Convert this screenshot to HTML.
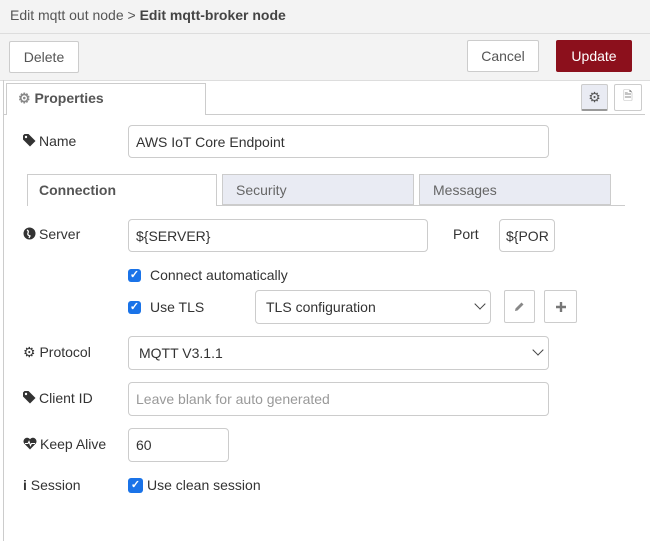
<!DOCTYPE html><html><head><style>
body{margin:0;width:650px;height:541px;overflow:hidden;background:#fff;font-family:"Liberation Sans",sans-serif;font-size:14px;color:#333;position:relative}
.a{position:absolute}
.in{position:absolute;border:1px solid #ccc;border-radius:4px;background:#fff;box-sizing:border-box;padding-left:7px;display:flex;align-items:center;font-size:14px;color:#333}
.btn{position:absolute;border:1px solid #ccc;background:#fff;box-sizing:border-box;display:flex;align-items:center;justify-content:center;color:#555;font-size:14px;border-radius:2px}
.lbl{position:absolute;font-size:14px;color:#333}
.lbl svg{vertical-align:-1px;margin-right:3px}
.cb{position:absolute;width:13px;height:13px;background:#1a73e8;border-radius:3px;color:#fff;font-size:11px;line-height:13px;text-align:center;font-weight:bold}
.chev{position:absolute;width:7px;height:7px;border-right:1.5px solid #444;border-bottom:1.5px solid #444;transform:rotate(45deg)}
</style></head><body>
<div class="a" style="left:0;top:0;width:650px;height:80px;background:#f3f3f3;border-bottom:1px solid #ddd"></div>
<div class="a" style="left:0;top:33px;width:650px;height:1px;background:#ddd"></div>
<div class="a" style="left:10px;top:7px;color:#555;font-size:14px">Edit mqtt out node &gt; <b style="color:#444">Edit mqtt-broker node</b></div>
<div class="btn" style="left:9px;top:41px;width:70px;height:32px">Delete</div>
<div class="btn" style="left:467px;top:40px;width:72px;height:32px">Cancel</div>
<div class="btn" style="left:556px;top:40px;width:76px;height:32px;background:#8c101c;border-color:#8c101c;color:#fff">Update</div>
<div class="a" style="left:3px;top:80px;width:1px;height:461px;background:#ccc"></div>
<div class="a" style="left:3px;top:114px;width:642px;height:1px;background:#ccc"></div>
<div class="a" style="left:6px;top:83px;width:200px;height:32px;background:#fff;border:1px solid #ccc;border-bottom:none;box-sizing:border-box"></div>
<div class="a" style="left:18px;top:90px;font-weight:bold;color:#555;font-size:14px"><span style="color:#888">⚙</span> Properties</div>
<div class="btn" style="left:581px;top:84px;width:27px;height:27px;background:#e9ebf3;border-bottom:2px solid #999;color:#555">⚙</div>
<div class="btn" style="left:614px;top:84px;width:28px;height:27px;color:#888;font-size:12px">🗎</div>
<div class="lbl" style="left:23px;top:133px"><svg width="13" height="13" viewBox="0 0 13 13"><path d="M0 1.5V5.5L7 12.5L12.5 7L5.5 0H1.5Z" fill="#333"/><circle cx="3" cy="3" r="1.2" fill="#fff"/></svg>Name</div>
<div class="in" style="left:128px;top:125px;width:421px;height:33px">AWS IoT Core Endpoint</div>
<div class="a" style="left:27px;top:205px;width:598px;height:1px;background:#ccc"></div>
<div class="a" style="left:27px;top:174px;width:190px;height:32px;background:#fff;border:1px solid #ccc;border-bottom:none;box-sizing:border-box;padding:7px 11px;font-weight:bold;color:#555">Connection</div>
<div class="a" style="left:222px;top:174px;width:192px;height:31px;background:#e9ebf3;border:1px solid #ccc;box-sizing:border-box;padding:7px 13px;color:#666">Security</div>
<div class="a" style="left:419px;top:174px;width:192px;height:31px;background:#e9ebf3;border:1px solid #ccc;box-sizing:border-box;padding:7px 13px;color:#666">Messages</div>
<div class="lbl" style="left:23px;top:226px"><svg width="13" height="13" viewBox="0 0 13 13"><circle cx="6.5" cy="6.5" r="6" fill="#333"/><path d="M4 3Q6 4 5 6T7 9L6 11" stroke="#fff" stroke-width="1.3" fill="none"/></svg>Server</div>
<div class="in" style="left:128px;top:219px;width:300px;height:33px">${SERVER}</div>
<div class="lbl" style="left:453px;top:226px">Port</div>
<div class="in" style="left:499px;top:219px;width:56px;height:33px;overflow:hidden;white-space:nowrap;padding-left:6px">${POR</div>
<div class="cb" style="left:128px;top:269px">✓</div>
<div class="lbl" style="left:150px;top:267px">Connect automatically</div>
<div class="cb" style="left:128px;top:301px">✓</div>
<div class="lbl" style="left:150px;top:299px">Use TLS</div>
<div class="in" style="left:255px;top:290px;width:236px;height:34px;padding-left:10px">TLS configuration</div>
<div class="chev" style="left:476px;top:300px"></div>
<div class="btn" style="left:504px;top:290px;width:31px;height:33px"><svg width="11" height="11" viewBox="0 0 11 11"><path d="M1 10L1.5 7.5L7.5 1.5L9.5 3.5L3.5 9.5Z" fill="#888"/></svg></div>
<div class="btn" style="left:544px;top:290px;width:33px;height:33px"><svg width="10" height="10"><path d="M5 0V10M0 5H10" stroke="#777" stroke-width="2.4"/></svg></div>
<div class="lbl" style="left:23px;top:344px">⚙ Protocol</div>
<div class="in" style="left:128px;top:336px;width:421px;height:34px;padding-left:10px">MQTT V3.1.1</div>
<div class="chev" style="left:534px;top:346px"></div>
<div class="lbl" style="left:23px;top:390px"><svg width="13" height="13" viewBox="0 0 13 13"><path d="M0 1.5V5.5L7 12.5L12.5 7L5.5 0H1.5Z" fill="#333"/><circle cx="3" cy="3" r="1.2" fill="#fff"/></svg>Client ID</div>
<div class="in" style="left:128px;top:382px;width:421px;height:34px;color:#999">Leave blank for auto generated</div>
<div class="lbl" style="left:23px;top:436px"><svg width="14" height="13" viewBox="0 0 14 13"><path d="M7 12.5L1.2 6.5A3.3 3.3 0 0 1 7 2.2A3.3 3.3 0 0 1 12.8 6.5Z" fill="#333"/><path d="M2 6.5H5L6 4.5L7.5 8.5L8.5 6.5H12" stroke="#fff" stroke-width="1.1" fill="none"/></svg>Keep Alive</div>
<div class="in" style="left:128px;top:428px;width:101px;height:34px">60</div>
<div class="lbl" style="left:23px;top:477px"><b>i</b> Session</div>
<div class="cb" style="left:128px;top:478px;width:15px;height:15px;line-height:15px">✓</div>
<div class="lbl" style="left:147px;top:477px">Use clean session</div>
</body></html>
